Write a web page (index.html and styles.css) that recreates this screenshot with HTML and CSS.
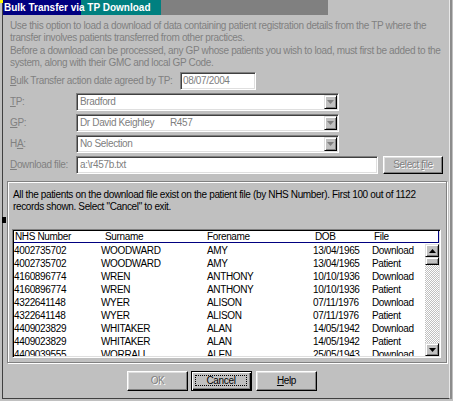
FILE: index.html
```html
<!DOCTYPE html>
<html>
<head>
<meta charset="utf-8">
<title>Bulk Transfer via TP Download</title>
<link rel="stylesheet" href="styles.css">
</head>
<body>
<div class="corner"></div>
<div class="window">
  <div class="titlebar"><span class="title">Bulk Transfer via TP Download</span></div>
  <p class="desc">Use this option to load a download of data containing patient registration details from the TP where the<br>transfer involves patients transferred from other practices.</p>
  <p class="desc desc2">Before a download can be processed, any GP whose patients you wish to load, must first be added to the<br>system, along with their GMC and local GP Code.</p>

  <div class="form">
    <div class="row">
      <span class="lbl lbl-date"><u>B</u>ulk Transfer action date agreed by TP:</span>
      <div class="field field-date">08/07/2004</div>
    </div>
    <div class="row">
      <span class="lbl"><u>T</u>P:</span>
      <div class="field combo"><span class="val">Bradford</span><span class="dd"><svg width="7" height="4" viewBox="0 0 7 4"><polygon points="0,0 7,0 3.5,4" fill="#808080"/></svg></span></div>
    </div>
    <div class="row">
      <span class="lbl"><u>G</u>P:</span>
      <div class="field combo"><span class="val"><span class="gp-name">Dr David Keighley</span>R457</span><span class="dd"><svg width="7" height="4" viewBox="0 0 7 4"><polygon points="0,0 7,0 3.5,4" fill="#808080"/></svg></span></div>
    </div>
    <div class="row">
      <span class="lbl">H<u>A</u>:</span>
      <div class="field combo"><span class="val">No Selection</span><span class="dd"><svg width="7" height="4" viewBox="0 0 7 4"><polygon points="0,0 7,0 3.5,4" fill="#808080"/></svg></span></div>
    </div>
    <div class="row">
      <span class="lbl"><u>D</u>ownload file:</span>
      <div class="field field-file">a:\r457b.txt</div>
      <div class="btn btn-select disabled"><span>Select <u>f</u>ile</span></div>
    </div>
  </div>

  <div class="group">
    <p class="info">All the patients on the download file exist on the patient file (by NHS Number). First 100 out of 1122<br>records shown. Select "Cancel" to exit.</p>
    <div class="list">
      <div class="lhead">
        <span>NHS Number</span><span>Surname</span><span>Forename</span><span>DOB</span><span>File</span>
      </div>
      <div class="lbody">
        <div class="rows">
          <div class="lrow"><span>4002735702</span><span>WOODWARD</span><span>AMY</span><span>13/04/1965</span><span>Download</span></div>
          <div class="lrow"><span>4002735702</span><span>WOODWARD</span><span>AMY</span><span>13/04/1965</span><span>Patient</span></div>
          <div class="lrow"><span>4160896774</span><span>WREN</span><span>ANTHONY</span><span>10/10/1936</span><span>Download</span></div>
          <div class="lrow"><span>4160896774</span><span>WREN</span><span>ANTHONY</span><span>10/10/1936</span><span>Patient</span></div>
          <div class="lrow"><span>4322641148</span><span>WYER</span><span>ALISON</span><span>07/11/1976</span><span>Download</span></div>
          <div class="lrow"><span>4322641148</span><span>WYER</span><span>ALISON</span><span>07/11/1976</span><span>Patient</span></div>
          <div class="lrow"><span>4409023829</span><span>WHITAKER</span><span>ALAN</span><span>14/05/1942</span><span>Download</span></div>
          <div class="lrow"><span>4409023829</span><span>WHITAKER</span><span>ALAN</span><span>14/05/1942</span><span>Patient</span></div>
          <div class="lrow"><span>4409039555</span><span>WORRALL</span><span>ALEN</span><span>25/05/1943</span><span>Download</span></div>
        </div>
        <div class="sbar">
          <div class="sbtn"><svg width="7" height="4" viewBox="0 0 7 4"><polygon points="3.5,0 7,4 0,4" fill="#000"/></svg></div>
          <div class="thumb"></div>
          <div class="track"></div>
          <div class="sbtn"><svg width="7" height="4" viewBox="0 0 7 4"><polygon points="0,0 7,0 3.5,4" fill="#000"/></svg></div>
        </div>
      </div>
    </div>
  </div>

  <div class="buttons">
    <div class="btn disabled"><span>OK</span></div>
    <div class="btn btn-default"><span class="focus">Cancel</span></div>
    <div class="btn"><span><u>H</u>elp</span></div>
  </div>
</div>
<div class="notch"></div>
</body>
</html>
```

FILE: styles.css
```css
* { box-sizing: border-box; }
html, body { margin: 0; padding: 0; }
body {
  width: 453px;
  height: 401px;
  overflow: hidden;
  position: relative;
  background: #c0c0c0;
  color: #000;
  font-family: "Liberation Sans", Arial, sans-serif;
  font-size: 10px;
  letter-spacing: -0.35px;
  line-height: 12px;
}
u { text-decoration: underline; text-underline-offset: 1px; }

.corner {
  position: absolute;
  left: 0; top: 0;
  width: 3px; height: 3px;
  background: #ffff00;
}
.notch {
  position: absolute;
  left: 2px; top: 217px;
  width: 4px; height: 6px;
  background: #000;
}

.window {
  margin-left: 2px;
  width: 448px;
  height: 399px;
  border-left: 1px solid #404040;
  border-right: 1px solid #e8e8e8;
  border-bottom: 1px solid #404040;
  box-shadow: 2px 0 0 #8c8c8c;
}

.titlebar {
  height: 15px;
  background: linear-gradient(to right, #000080 0 78px, #008080 78px 158px, #808080 158px 325px, transparent 325px);
}
.title {
  display: block;
  padding-left: 1px;
  color: #fff;
  font-weight: bold;
  font-size: 10px;
  letter-spacing: 0;
  line-height: 15px;
  white-space: nowrap;
}

.desc {
  margin: 5px 0 0 7px;
  color: #808080;
  white-space: nowrap;
}
.desc2 { margin-top: 1px; }

.form { margin: 3px 0 0 7px; }
.row {
  display: flex;
  align-items: center;
  height: 18px;
  margin-top: 3px;
}
.row:first-child { margin-top: 0; }
.lbl {
  width: 66px;
  flex: none;
  color: #808080;
  white-space: nowrap;
}
.lbl-date { width: 170px; }

.field {
  height: 18px;
  display: flex;
  align-items: center;
  padding-left: 3px;
  background: #fff;
  color: #808080;
  border: 1px solid;
  border-color: #808080 #fff #fff #808080;
  box-shadow: inset 1px 1px #404040, inset -1px -1px #dfdfdf;
  white-space: nowrap;
}
.field-date { width: 76px; padding-left: 2px; }
.combo { width: 263px; }
.field-file { width: 302px; }
.gp-name { display: inline-block; width: 90px; }
.dd {
  margin-left: auto;
  margin-right: 1px;
  width: 13px;
  height: 14px;
  display: flex;
  align-items: center;
  justify-content: center;
  background: #c0c0c0;
  border: 1px solid;
  border-color: #dfdfdf #000 #000 #dfdfdf;
  box-shadow: inset 1px 1px #fff, inset -1px -1px #808080;
}

.btn {
  width: 61px;
  height: 20px;
  flex: none;
  display: flex;
  align-items: center;
  justify-content: center;
  background: #c0c0c0;
  border: 1px solid;
  border-color: #fff #000 #000 #fff;
  box-shadow: inset -1px -1px #808080, inset 1px 1px #dfdfdf;
  white-space: nowrap;
}
.btn.disabled { color: #808080; text-shadow: 1px 1px #fff; }
.btn-select { width: 60px; height: 18px; margin-left: 5px; }
.btn-default {
  border-color: #000;
  box-shadow: inset 1px 1px #fff, inset -1px -1px #000, inset -2px -2px #808080;
  padding: 3px 4px 4px 3px;
  margin-right: 1px;
}
.focus {
  flex: 1;
  height: 100%;
  display: flex;
  align-items: center;
  justify-content: center;
  border: 1px dotted #000;
}

.group {
  margin: 7px 0 0 4px;
  width: 440px;
  height: 182px;
  padding: 7px 0 0 4px;
  border: 1px solid #808080;
  box-shadow: inset 1px 1px #fff, 1px 1px #fff;
}
.info {
  margin: 0 0 0 1px;
  white-space: nowrap;
}
.list {
  margin-top: 16px;
  width: 429px;
  height: 129px;
  padding: 1px;
  background: #fff;
  border: 1px solid;
  border-color: #808080 #fff #fff #808080;
  box-shadow: inset 1px 1px #000, inset -1px -1px #dfdfdf;
  overflow: hidden;
}
.lhead {
  display: grid;
  grid-template-columns: 90px 102px 108px 59px 1fr;
  height: 12px;
  line-height: 11px;
  padding-left: 1px;
  border-right: 1px solid #000080;
  border-bottom: 1px solid #000080;
  white-space: nowrap;
}
.lbody {
  display: flex;
  height: 113px;
  padding-top: 1px;
}
.rows {
  flex: 1;
  overflow: hidden;
}
.lrow {
  display: grid;
  grid-template-columns: 87px 106px 106px 59px 1fr;
  height: 13px;
  line-height: 13px;
  white-space: nowrap;
}
.sbar {
  width: 14px;
  flex: none;
  display: flex;
  flex-direction: column;
}
.sbtn, .thumb {
  background: #c0c0c0;
  border: 1px solid;
  border-color: #dfdfdf #000 #000 #dfdfdf;
  box-shadow: inset 1px 1px #fff, inset -1px -1px #808080;
}
.sbtn {
  height: 13px;
  display: flex;
  align-items: center;
  justify-content: center;
}
.thumb { height: 8px; }
.track {
  flex: 1;
  background: repeating-conic-gradient(#c0c0c0 0 25%, #fff 0 50%) 0 0 / 2px 2px;
}

.buttons {
  display: flex;
  gap: 3px;
  margin-top: 8px;
  padding-left: 124px;
}
```
